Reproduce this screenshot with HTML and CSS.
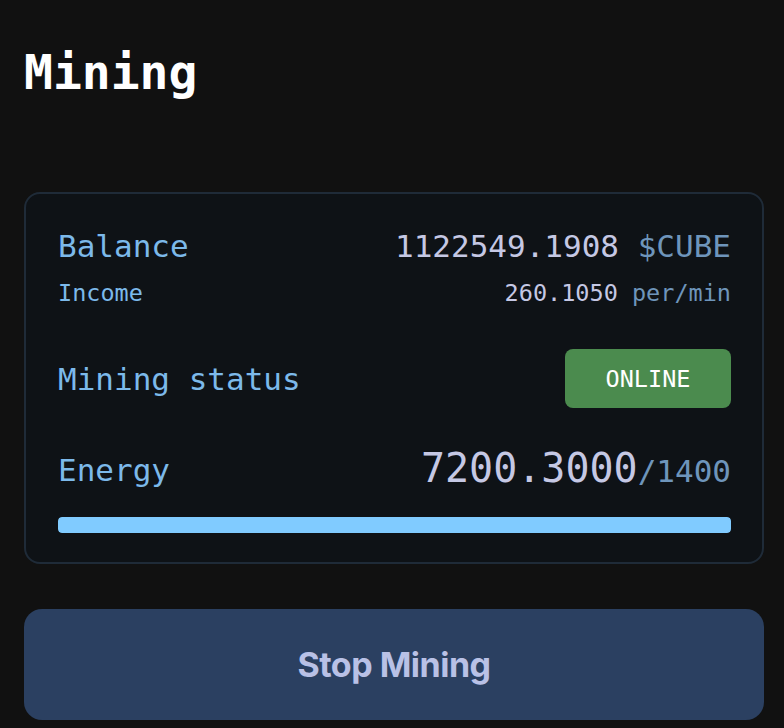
FILE: index.html
```html
<!DOCTYPE html>
<html lang="en">
<head>
  <meta charset="UTF-8">
  <meta name="viewport" content="width=device-width, initial-scale=1.0">
  <title>Mining</title>
  <link rel="stylesheet" href="styles.css">
</head>
<body>
  <div class="page">
    <h1>Mining</h1>

    <div class="card">
      <div class="row balance">
        <span class="label">Balance</span>
        <span class="value">1122549.1908 <span class="unit">$CUBE</span></span>
      </div>
      <div class="row income">
        <span class="label">Income</span>
        <span class="value">260.1050 <span class="unit">per/min</span></span>
      </div>
      <div class="row status">
        <span class="label">Mining status</span>
        <span class="badge">ONLINE</span>
      </div>
      <div class="row energy">
        <span class="label">Energy</span>
        <span class="value"><span class="big">7200.3000</span><span class="unit">/1400</span></span>
      </div>
      <div class="bar"><div class="fill" style="width: 100%"></div></div>
    </div>

    <button class="action">Stop Mining</button>
  </div>
</body>
</html>
```

FILE: styles.css
```css
html, body {
  margin: 0;
  background: #111111;
}
body {
  font-family: "DejaVu Sans Mono", "Liberation Mono", monospace;
  color: #c5c8e4;
}
.page {
  padding: 44px 20px 0 24px;
}
h1 {
  margin: 0 0 92px 0;
  font-size: 48px;
  line-height: 56px;
  font-weight: bold;
  color: #ffffff;
}
.card {
  background: #0e1216;
  border: 2px solid #1f2b38;
  border-radius: 16px;
  padding: 32px 31px 29px 32px;
}
.row {
  display: flex;
  justify-content: space-between;
  align-items: center;
}
.label {
  color: #7cb9ea;
}
.unit {
  color: #6e95bb;
}
.balance {
  font-size: 31px;
  line-height: 40px;
}
.income {
  margin-top: 13px;
  font-size: 23.5px;
  line-height: 28px;
}
.status {
  margin-top: 42px;
  font-size: 31px;
}
.badge {
  background: #4b8b4e;
  color: #ffffff;
  font-size: 23.5px;
  border-radius: 8px;
  width: 166px;
  height: 59px;
  display: flex;
  align-items: center;
  justify-content: center;
}
.energy {
  margin-top: 36px;
  font-size: 31px;
  line-height: 48px;
}
.energy .value {
  display: flex;
  align-items: baseline;
}
.big {
  font-size: 40px;
}
.bar {
  margin-top: 22px;
  height: 16px;
  border-radius: 4px;
  background: #1c2a38;
  overflow: hidden;
}
.fill {
  height: 100%;
  background: #80cbff;
  border-radius: 4px;
}
.action {
  display: block;
  width: 100%;
  margin-top: 45px;
  height: 111px;
  border: none;
  border-radius: 18px;
  background: #2b4061;
  color: #b9c1e6;
  font-family: Inter, "Noto Sans", sans-serif;
  font-weight: bold;
  font-size: 34px;
  letter-spacing: -0.5px;
  cursor: pointer;
}
```
